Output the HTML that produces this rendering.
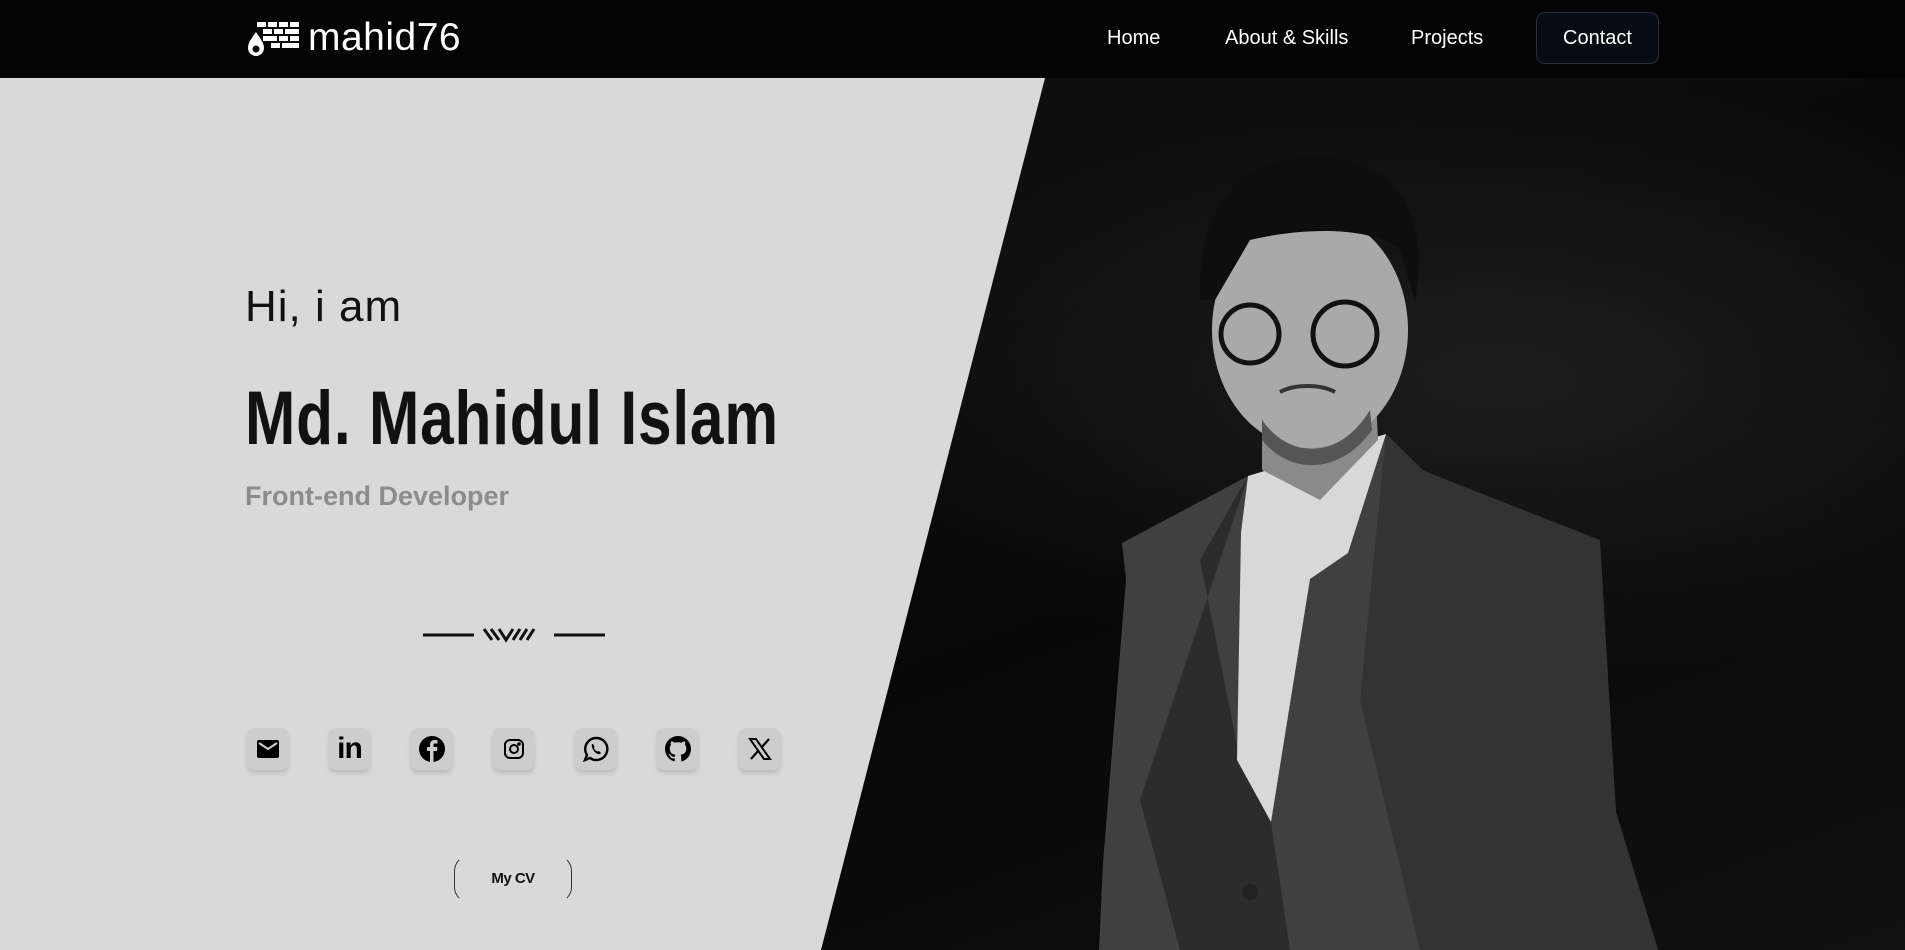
<!DOCTYPE html>
<html><head><meta charset="utf-8">
<style>
*{margin:0;padding:0;box-sizing:border-box}
html,body{width:1905px;height:950px;overflow:hidden;background:#0b0b0b;font-family:"Liberation Sans",sans-serif}
nav{position:absolute;left:0;top:0;width:1905px;height:78px;background:#040404;z-index:5}
.logo{position:absolute;left:247px;top:18px;display:flex;align-items:center;color:#fff}
.logo span{font-size:39px;margin-left:9px;letter-spacing:0.5px;line-height:40px}
.nav a{position:absolute;top:27px;color:#fff;font-size:20px;text-decoration:none}
.contact{position:absolute;left:1536px;top:12px;width:123px;height:52px;border:1px solid #2a2f3a;border-radius:9px;background:#070b14;color:#fff;font-size:20px;text-align:center;line-height:50px}
.right{position:absolute;left:0;top:78px;width:1905px;height:872px;background:radial-gradient(ellipse 700px 300px at 1500px 300px,#1d1d1d,transparent),linear-gradient(160deg,#141414,#070707 60%,#111)}
.left{position:absolute;left:0;top:78px;width:1905px;height:872px;background:#d9d9d9;clip-path:polygon(0 0,1045px 0,821px 872px,0 872px)}
.t{position:absolute;white-space:nowrap}
.sb{position:absolute;top:728px;width:41px;height:42px;background:#cdcdcd;border-radius:7px;box-shadow:0 3px 5px rgba(0,0,0,.15);display:flex;align-items:center;justify-content:center}
.cv{position:absolute;left:454px;top:855px;width:118px;height:48px;border:1px solid #333;border-radius:16px;font-size:15px;font-weight:bold;text-align:center;line-height:46px;color:#111;letter-spacing:-0.5px;border-top-color:transparent;border-bottom-color:transparent}
</style></head><body>
<div class="right"></div>
<svg style="position:absolute;left:0;top:0" width="1905" height="950">
<polygon fill="#404040" points="1122,543 1248,476 1386,434 1424,471 1570,533 1616,812 1658,950 1099,950 1103,863 1126,579"/>
<polygon fill="#333" points="1386,434 1424,471 1600,540 1616,812 1658,950 1420,950 1360,700"/>
<polygon fill="#2c2c2c" points="1248,476 1200,560 1240,760 1271,822 1290,950 1180,950 1140,800"/>
<polygon fill="#d8d8d8" points="1248,476 1386,434 1348,553 1310,579 1271,822 1237,760 1241,533"/>
<polygon fill="#8a8a8a" points="1262,400 1376,400 1378,440 1320,500 1262,470"/>
<ellipse cx="1310" cy="330" rx="98" ry="118" fill="#a9a9a9"/>
<path d="M1262,420 C1290,460 1340,460 1370,410 L1372,430 C1340,475 1290,475 1262,440Z" fill="#555"/>
<path d="M1200,300 C1195,180 1270,150 1330,158 C1400,165 1430,220 1415,300 L1400,250 C1370,225 1300,228 1250,240 L1215,300Z" fill="#0e0e0e"/>
<circle cx="1250" cy="334" r="29" fill="none" stroke="#111" stroke-width="5"/>
<circle cx="1345" cy="334" r="32" fill="none" stroke="#111" stroke-width="5"/>
<path d="M1280,392 C1295,384 1320,384 1335,392" stroke="#333" stroke-width="4" fill="none"/>
<circle cx="1250" cy="892" r="8" fill="#222"/>
</svg>
<div class="left"></div>
<nav>
<div class="logo">
<svg width="52" height="36" viewBox="0 0 52 36"><g fill="#fff"><rect x="10" y="2" width="9" height="5"/><rect x="21" y="2" width="9" height="5"/><rect x="32" y="2" width="9" height="5"/><rect x="43" y="2" width="9" height="5"/><rect x="16" y="9" width="9" height="5"/><rect x="27" y="9" width="9" height="5"/><rect x="38" y="9" width="14" height="5"/><rect x="16" y="16" width="14" height="5"/><rect x="32" y="16" width="9" height="5"/><rect x="43" y="16" width="9" height="5"/><rect x="24" y="23" width="9" height="5"/><rect x="35" y="23" width="17" height="5"/></g><path d="M9 12 C3 20 1 24 1 28 A8 8 0 0 0 17 28 C17 23 13 18 9 12Z" fill="#fff"/><circle cx="9" cy="29" r="3.5" fill="#040404"/></svg>
<span>mahid76</span></div>
<div class="nav"><a style="left:1107px">Home</a><a style="left:1225px">About &amp; Skills</a><a style="left:1411px">Projects</a></div>
<div class="contact">Contact</div>
</nav>
<div class="t" style="left:245px;top:282px;font-size:44px;letter-spacing:1px;color:#111">Hi, i am</div>
<div class="t" style="left:245px;top:375px;font-size:76px;font-weight:bold;color:#111;transform:scaleX(0.795);transform-origin:left;letter-spacing:1px">Md. Mahidul Islam</div>
<div class="t" style="left:245px;top:481px;font-size:27px;font-weight:bold;color:#8c8c8c">Front-end Developer</div>
<svg style="position:absolute;left:420px;top:622px" width="190" height="26" viewBox="0 0 190 26">
<g stroke="#111" stroke-width="3" fill="none"><line x1="3" y1="13" x2="54" y2="13"/><line x1="134" y1="13" x2="185" y2="13"/><path d="M64 7 L72 18 M71 7 L79 18 M79 7 L86 18 L93 7 M93 18 L100 7 M100 18 L107 7 M107 18 L114 7"/></g></svg>
<div class="sb" style="left:247px"><svg width="22" height="18" viewBox="0 0 22 18"><rect x="0" y="0" width="22" height="18" rx="2" fill="#000"/><path d="M2 3 L11 9 L20 3" stroke="#cdcdcd" stroke-width="2" fill="none"/></svg></div>
<div class="sb" style="left:329px"><span style="font-size:30px;font-weight:bold;color:#000;letter-spacing:-1px">in</span></div>
<div class="sb" style="left:411px"><svg width="26" height="26" viewBox="0 0 26 26"><circle cx="13" cy="13" r="13" fill="#000"/><path d="M14.5 26 V15 H18 L18.5 11 H14.5 V9 C14.5 8 15 7.5 16 7.5 H18.5 V4 H15.5 C12.5 4 11 6 11 8.5 V11 H8 V15 H11 V26Z" fill="#cdcdcd"/></svg></div>
<div class="sb" style="left:493px"><svg width="20" height="20" viewBox="0 0 20 20" fill="none" stroke="#000" stroke-width="2"><rect x="1" y="1" width="18" height="18" rx="5"/><circle cx="10" cy="10" r="4"/><circle cx="15" cy="5" r=".8" fill="#000"/></svg></div>
<div class="sb" style="left:575px"><svg width="26" height="26" viewBox="0 0 26 26"><path d="M13 2 A11 11 0 1 1 7 22 L2 24 L4 19 A11 11 0 0 1 13 2Z" fill="none" stroke="#000" stroke-width="2.4"/><path d="M9 8 C8 10 10 15 13 17 C15 18.5 17 18.5 18 17 L16 15 L14.5 15.5 C13 15 11.5 13.5 11 12 L11.5 10.5 L10 8Z" fill="#000"/></svg></div>
<div class="sb" style="left:657px"><svg width="26" height="26" viewBox="0 0 16 16"><path fill="#000" d="M8 0C3.58 0 0 3.580 0 8c0 3.54 2.29 6.53 5.47 7.59.4.07.55-.17.55-.38 0-.19-.01-.82-.01-1.490-2.010.37-2.530-.49-2.690-.94-.09-.23-.48-.94-.82-1.130-.28-.15-.68-.52-.01-.53.63-.01 1.08.58 1.23.82.72 1.21 1.87.87 2.33.66.07-.52.28-.87.51-1.070-1.78-.2-3.64-.89-3.640-3.95 0-.87.31-1.59.82-2.150-.08-.2-.36-1.02.08-2.12 0 0 .67-.21 2.2.82.64-.18 1.32-.27 2-.27.68 0 1.36.09 2 .27 1.53-1.04 2.2-.82 2.2-.82.44 1.1.16 1.92.08 2.12.51.56.82 1.27.82 2.15 0 3.07-1.87 3.75-3.65 3.95.29.25.54.73.54 1.48 0 1.07-.01 1.93-.01 2.2 0 .21.15.46.55.38A8.013 8.013 0 0016 8c0-4.42-3.58-8-8-8z"/></svg></div>
<div class="sb" style="left:739px"><svg width="24" height="22" viewBox="0 0 24 22"><path d="M2 1 H8 L22 21 H16Z" fill="none" stroke="#000" stroke-width="2"/><path d="M21 1 L13.5 9.5 M3 21 L10.5 12.5" stroke="#000" stroke-width="2.2"/></svg></div>
<div class="cv">My CV</div>
</body></html>
